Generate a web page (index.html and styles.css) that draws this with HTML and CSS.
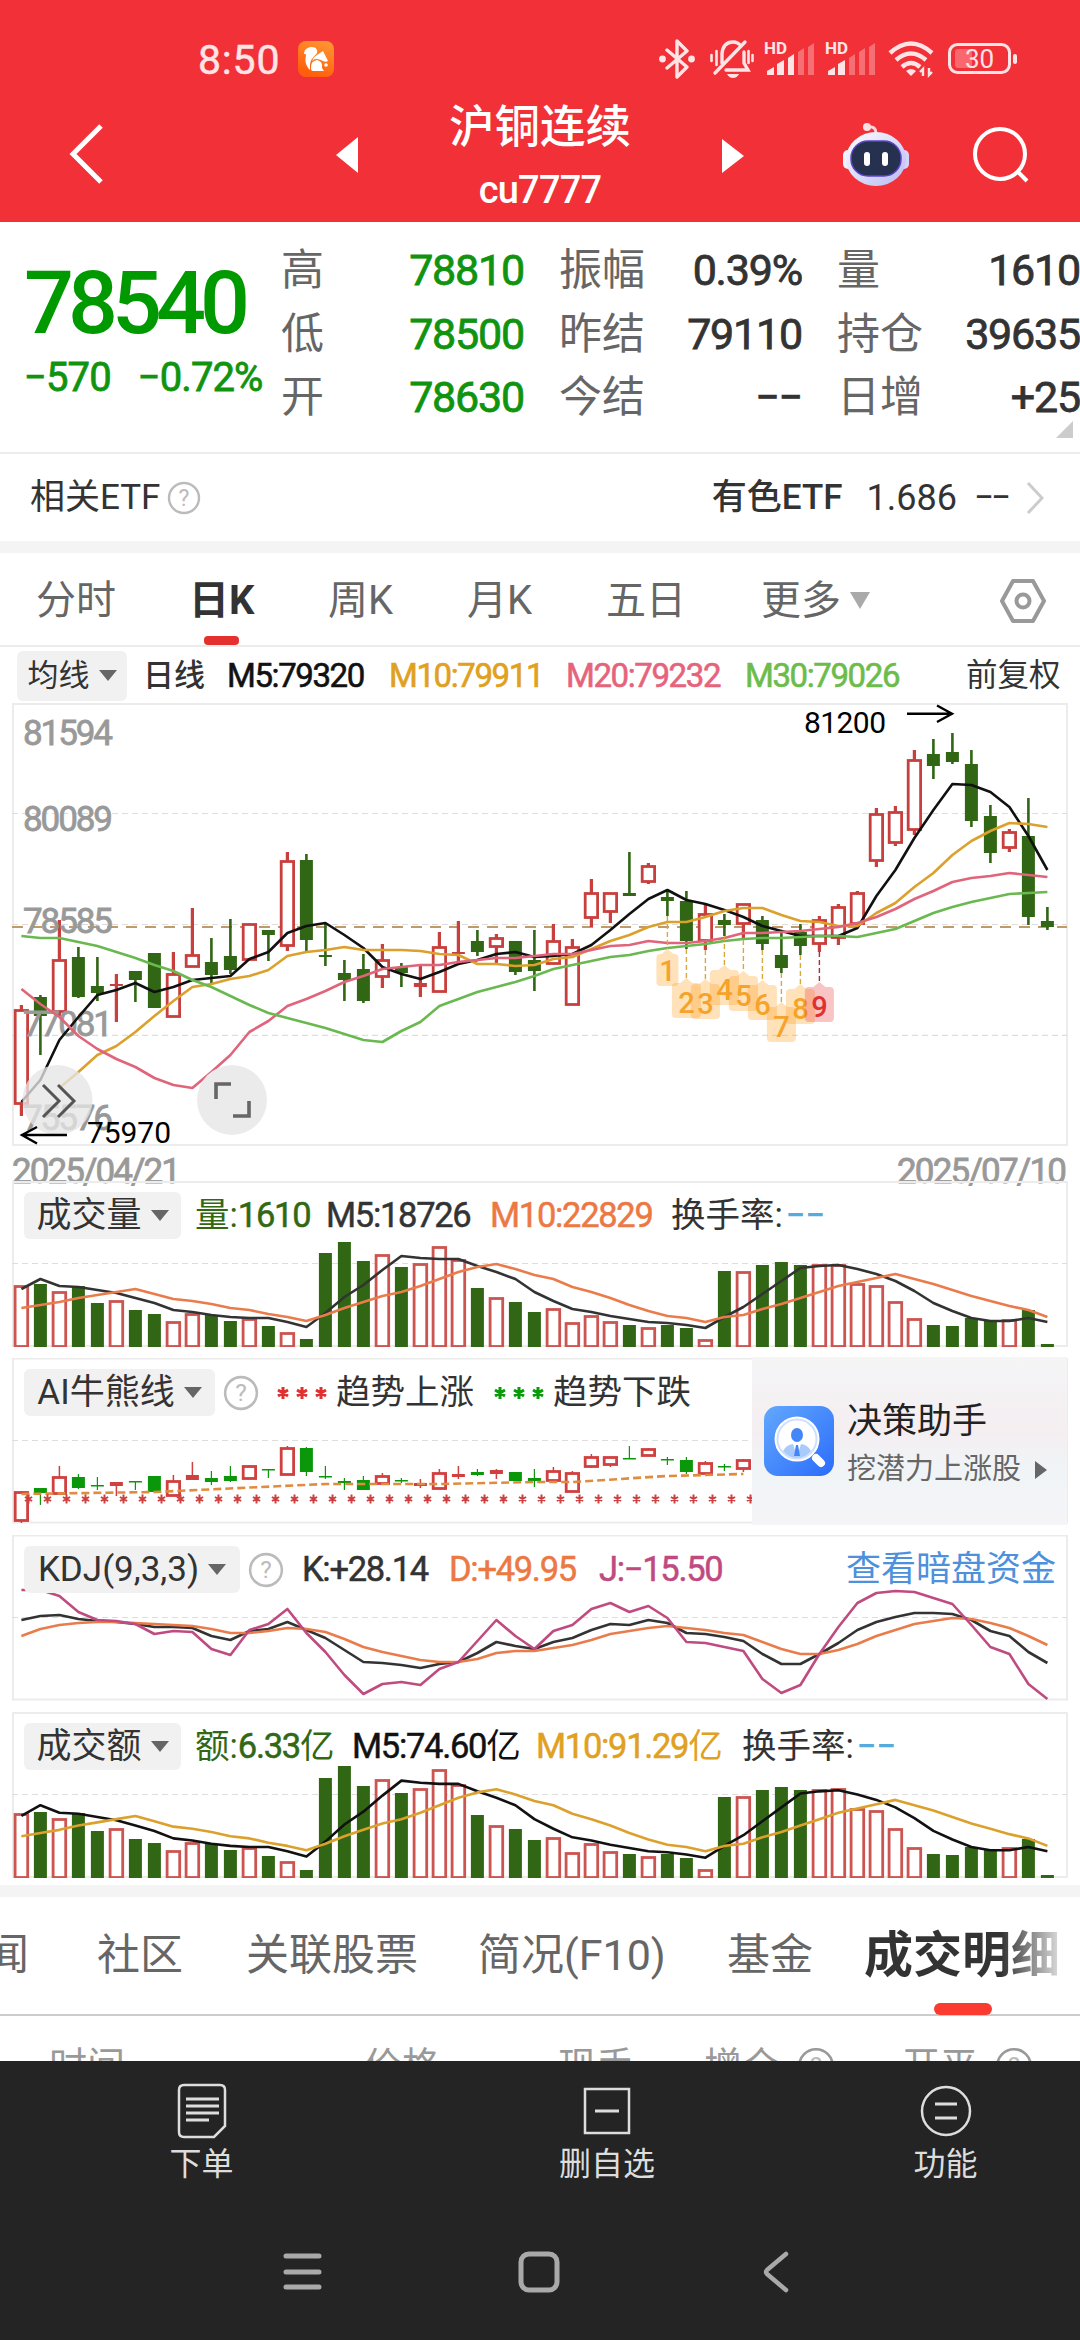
FILE: index.html
```
<!DOCTYPE html>
<html lang="zh-CN">
<head>
    <meta charset="UTF-8">
    <meta name="viewport" content="width=device-width, initial-scale=1.0">
    <title>沪铜连续 cu7777</title>
    <link rel="stylesheet" href="styles.css">
</head>
<body>
    <header>
        <div class="status-bar">
            <span class="clock">8:50</span>
            <svg class="app-badge" width="36" height="36" viewBox="0 0 36 36">
                <defs>
                    <linearGradient id="badge-bg" x1="1" y1="0" x2="0.6" y2="1">
                        <stop offset="0" stop-color="#ff9a35"/>
                        <stop offset="1" stop-color="#ff5f0c"/>
                    </linearGradient>
                </defs>
                <rect width="36" height="36" rx="8" fill="url(#badge-bg)"/>
                <path d="M6 13C6 8 10 6 14 6C18 6 20 9 19 12C17 15 12 18 12 24L12 29C7 24 7 19 8 15Q8 12 6 13Z" fill="#fff"/>
                <path d="M19 14L25 10L27 14L30 20Q27 22 23 19Q20 18 18 18Q15 18 14 21Q15 16 19 14Z" fill="#fff"/>
                <path d="M13 28Q12 20 19 19Q25 20 24 27L26 30H15Q13 30 13 28Z" fill="#fff"/>
                <circle cx="28" cy="24" r="1.8" fill="#fff"/>
            </svg>
            <div class="status-icons">
                <svg width="36" height="40" viewBox="0 0 36 40" fill="none" stroke="#ffe4e6" stroke-width="3.4" stroke-linejoin="round" stroke-linecap="round">
                    <path d="M8 11L28 28L18 38V2L28 12L8 29"/>
                    <g fill="#ffe4e6" stroke="none"><circle cx="3.5" cy="20" r="3.4"/><circle cx="32.5" cy="20" r="3.4"/></g>
                </svg>
                <svg class="bell" width="44" height="40" viewBox="0 0 44 40" fill="none" stroke="#ffe4e6" stroke-width="3.4" stroke-linecap="round">
                    <path d="M12 24V15Q13 3 23 3Q28 3 31 7M34 13V24L38 31H16M5 34L35 3"/>
                    <path d="M1.500 16V22M6.500 12V26M38.500 12V24M42.500 16V22" stroke-width="2.600"/>
                    <path d="M17 35H29Q27 39 23 39Q19 39 17 35Z" fill="#ffe4e6" stroke="none"/>
                </svg>
                <svg class="signal" width="50" height="34" viewBox="0 0 50 34" fill="#ffe4e6">
                    <text x="-1" y="12" class="hd">HD</text>
                    <path d="M2 29L9 25V33H2ZM12 22L19 18V33H12ZM23 16L29 12V33H23Z"/>
                    <path d="M33 10L39 6V33H33ZM43 5L49 1V33H43Z" opacity=".35"/>
                </svg>
                <svg class="signal" width="50" height="34" viewBox="0 0 50 34" fill="#ffe4e6">
                    <text x="-1" y="12" class="hd">HD</text>
                    <path d="M2 29L9 25V33H2ZM12 22L19 18V33H12Z"/>
                    <path d="M23 16L29 12V33H23ZM33 10L39 6V33H33ZM43 5L49 1V33H43Z" opacity=".35"/>
                </svg>
                <svg class="wifi" width="46" height="38" viewBox="0 0 46 38" fill="none" stroke="#ffe4e6" stroke-width="4.4">
                    <path d="M2 13Q23 -6 44 13M8 20Q23 7 38 20M14 27Q23 19 32 27"/>
                    <path d="M18 31Q23 27 28 31L23 36Z" fill="#ffe4e6" stroke="none"/>
                    <path d="M35 36V29L32 32M41 28V35L44 32" stroke-width="2.400"/>
                </svg>
                <svg class="battery" width="70" height="32" viewBox="0 0 70 32">
                    <rect x="1.500" y="1.500" width="60" height="28" rx="8" fill="none" stroke="#ffe4e6" stroke-width="3"/>
                    <rect x="7" y="6" width="17" height="19" rx="3" fill="#f9686e"/>
                    <rect x="65" y="11" width="4" height="10" rx="2" fill="#ffe4e6"/>
                    <text x="31.500" y="25" text-anchor="middle" class="battery-text">30</text>
                </svg>
            </div>
        </div>
        <div class="title-bar">
            <svg class="back" width="36" height="62" viewBox="0 0 36 62" fill="none" stroke="#fff" stroke-width="5"><path d="M33 3L5 31L33 59"/></svg>
            <svg class="prev" width="24" height="36" viewBox="0 0 24 36"><path d="M23 0V36L1 18Z" fill="#fff"/></svg>
            <div class="title">
                <h1>沪铜连续</h1>
                <p>cu7777</p>
            </div>
            <svg class="next" width="24" height="36" viewBox="0 0 24 36"><path d="M1 1V35L23 18Z" fill="#fff"/></svg>
            <svg class="robot" width="68" height="64" viewBox="0 0 68 64">
                <defs>
                    <linearGradient id="shell" x1="0" y1="0" x2="1" y2="1">
                        <stop offset="0" stop-color="#fff"/>
                        <stop offset="1" stop-color="#b9b9f2"/>
                    </linearGradient>
                </defs>
                <path d="M34 11Q34 4 26 5" fill="none" stroke="#fbd5dc" stroke-width="3"/>
                <circle cx="25" cy="5" r="4" fill="#fbdfe4"/>
                <rect x="1" y="28" width="10" height="19" rx="5" fill="#f3f2ff"/>
                <rect x="57" y="28" width="10" height="19" rx="5" fill="#d5d5fb"/>
                <ellipse cx="34" cy="37" rx="30" ry="27" fill="url(#shell)"/>
                <rect x="9" y="19" width="50" height="35" rx="17" fill="#26304f" stroke="#5a45c8" stroke-width="1.500"/>
                <rect x="22" y="30" width="6" height="14" rx="3" fill="#fff"/>
                <rect x="40" y="30" width="6" height="14" rx="3" fill="#fff"/>
            </svg>
            <svg class="search" width="58" height="58" viewBox="0 0 58 58" fill="none" stroke="#fff" stroke-width="4"><circle cx="28" cy="28" r="25"/><path d="M45 45L55 55"/></svg>
        </div>
    </header>

    <section class="quote">
        <div class="price-box">
            <div class="price">78540</div>
            <div class="change"><span>−570</span><span>−0.72%</span></div>
        </div>
        <dl class="stats">
            <div><dt>高</dt><dd class="down">78810</dd></div>
            <div><dt>振幅</dt><dd>0.39%</dd></div>
            <div><dt>量</dt><dd>1610</dd></div>
            <div><dt>低</dt><dd class="down">78500</dd></div>
            <div><dt>昨结</dt><dd>79110</dd></div>
            <div><dt>持仓</dt><dd>39635</dd></div>
            <div><dt>开</dt><dd class="down">78630</dd></div>
            <div><dt>今结</dt><dd>−−</dd></div>
            <div><dt>日增</dt><dd>+25</dd></div>
        </dl>
        <i class="corner"></i>
    </section>

    <section class="etf">
        <span>相关ETF</span>
        <svg class="help" width="34" height="34" viewBox="0 0 34 34"><circle cx="17" cy="17" r="15"/><text x="17" y="25">?</text></svg>
        <b>有色ETF</b>
        <span class="etf-price">1.686</span>
        <span class="etf-rate">−−</span>
        <svg width="20" height="34" viewBox="0 0 20 34" fill="none" stroke="#ccc" stroke-width="3"><path d="M3 2L17 17L3 32"/></svg>
    </section>

    <nav class="periods">
        <a>分时</a>
        <a class="active">日K</a>
        <a>周K</a>
        <a>月K</a>
        <a>五日</a>
        <a>更多<i class="caret"></i></a>
        <svg width="46" height="44" viewBox="0 0 46 44" fill="none" stroke="#999" stroke-width="4"><path d="M13 2H33L44 22L33 42H13L2 22Z" stroke-linejoin="round"/><circle cx="23" cy="22" r="6.500"/></svg>
    </nav>

    <div class="ma-row">
        <span class="chip">均线<i class="caret"></i></span>
        <span class="ma-name">日线</span>
        <span class="ma ma5">M5:79320</span>
        <span class="ma ma10">M10:79911</span>
        <span class="ma ma20">M20:79232</span>
        <span class="ma ma30">M30:79026</span>
        <span class="adjust">前复权</span>
    </div>

    <svg id="kline" class="kline" width="1080" height="477" viewBox="0 4 1080 477"></svg>

    <section class="panel">
        <svg id="volume" class="plot" width="1080" height="166" viewBox="0 1 1080 166"></svg>
        <div class="panel-head">
            <span class="chip">成交量<i class="caret"></i></span>
            <span class="legend green w131">量:<em>1610</em></span>
            <span class="legend w164"><em>M5:18726</em></span>
            <span class="legend orange w181"><em>M10:22829</em></span>
            <span class="legend">换手率:</span><span class="blue">−−</span>
        </div>
    </section>

    <section class="panel">
        <svg id="trend" class="plot" width="1080" height="166" viewBox="0 178 1080 166"></svg>
        <div class="panel-head">
            <span class="chip chip-trend">AI牛熊线<i class="caret"></i></span>
            <svg class="help help-lg" width="36" height="36" viewBox="0 0 34 34"><circle cx="17" cy="17" r="15"/><text x="17" y="25">?</text></svg>
            <svg class="stars" width="52" height="16" viewBox="0 0 52 16" stroke="#e03030"><use href="#s3"/></svg>
            <span class="legend w158">趋势上涨</span>
            <svg class="stars" width="52" height="16" viewBox="0 0 52 16" stroke="#099c09">
                <g id="s3" stroke-width="3"><path d="M6 2V14M1 5L11 11M1 11L11 5M25 2V14M20 5L30 11M20 11L30 5M44 2V14M39 5L49 11M39 11L49 5"/></g>
            </svg>
            <span class="legend">趋势下跌</span>
        </div>
        <a class="promo">
            <svg width="70" height="70" viewBox="0 0 70 70">
                <defs>
                    <linearGradient id="promo-bg" x1="0" y1="0" x2="1" y2="1">
                        <stop offset="0" stop-color="#62a8fd"/>
                        <stop offset="1" stop-color="#2b6cfb"/>
                    </linearGradient>
                </defs>
                <rect width="70" height="70" rx="14" fill="url(#promo-bg)"/>
                <circle cx="33" cy="33" r="20" fill="#fff" stroke="#cfe0ff" stroke-width="3"/>
                <circle cx="33" cy="33" r="21.500" fill="none" stroke="#fff" stroke-width="2"/>
                <ellipse cx="33" cy="29" rx="6" ry="7" fill="#4386f8"/>
                <path d="M19 45Q22 39 29 38L33 51L37 38Q44 39 47 45Q41 52 33 52Q25 52 19 45Z" fill="#a9cbfb"/>
                <path d="M32 39H34L36 50H30Z" fill="#4386f8"/>
                <path d="M52 52L57 57" stroke="#fff" stroke-width="8" stroke-linecap="round"/>
            </svg>
            <span class="promo-text">
                <strong>决策助手</strong>
                <span>挖潜力上涨股<i></i></span>
            </span>
        </a>
    </section>

    <section class="panel">
        <svg id="kdj" class="plot" width="1080" height="166" viewBox="0 5 1080 166"></svg>
        <div class="panel-head">
            <span class="chip chip-kdj">KDJ(9,3,3)<i class="caret"></i></span>
            <svg class="help help-lg" width="36" height="36" viewBox="0 0 34 34"><circle cx="17" cy="17" r="15"/><text x="17" y="25">?</text></svg>
            <span class="legend w147"><em>K:+28.14</em></span>
            <span class="legend orange w150"><em>D:+49.95</em></span>
            <span class="legend pink"><em>J:−15.50</em></span>
            <a class="link">查看暗盘资金</a>
        </div>
    </section>

    <section class="panel panel-last">
        <svg id="amount" class="plot" width="1080" height="166" viewBox="0 0 1080 166"></svg>
        <div class="panel-head">
            <span class="chip">成交额<i class="caret"></i></span>
            <span class="legend green w157">额:<em>6.33</em>亿</span>
            <span class="legend black w184"><em>M5:74.60</em>亿</span>
            <span class="legend gold w206"><em>M10:91.29</em>亿</span>
            <span class="legend">换手率:</span><span class="blue">−−</span>
        </div>
    </section>

    <nav class="detail-tabs">
        <a class="t-news">闻</a>
        <a class="t-bbs">社区</a>
        <a class="t-stock">关联股票</a>
        <a class="t-f10">简况(F10)</a>
        <a class="t-fund">基金</a>
        <a class="active">成交明细</a>
    </nav>

    <div class="table-head">
        <span>时间</span>
        <span>价格</span>
        <span>现手</span>
        <span>增仓<svg class="help" width="38" height="38" viewBox="0 0 34 34"><circle cx="17" cy="17" r="15"/><text x="17" y="25">?</text></svg></span>
        <span>开平<svg class="help" width="38" height="38" viewBox="0 0 34 34"><circle cx="17" cy="17" r="15"/><text x="17" y="25">?</text></svg></span>
    </div>

    <footer>
        <div class="actions">
            <a>
                <svg width="50" height="56" viewBox="0 0 50 56" fill="none" stroke="#ddd" stroke-width="2.500">
                    <path d="M7 2H43Q48 2 48 7V43L37 54H7Q2 54 2 49V7Q2 2 7 2Z"/>
                    <path d="M9 16H42M9 23H42M9 30H42M9 37H32" stroke-width="3"/>
                </svg>
                <span>下单</span>
            </a>
            <a>
                <svg width="50" height="56" viewBox="0 0 50 56" fill="none" stroke="#ddd" stroke-width="2.500"><rect x="3" y="6" width="44" height="44"/><path d="M13 28H37" stroke-width="3"/></svg>
                <span>删自选</span>
            </a>
            <a>
                <svg width="52" height="56" viewBox="0 0 52 56" fill="none" stroke="#ddd" stroke-width="2.500"><circle cx="26" cy="28" r="24"/><path d="M15 21H37M15 35H37" stroke-width="3"/></svg>
                <span>功能</span>
            </a>
        </div>
        <div class="system-nav">
            <svg width="40" height="42" viewBox="0 0 40 42" stroke="#a9a9a9" stroke-width="5" stroke-linecap="round"><path d="M3 5H36M3 21H36M3 36H36"/></svg>
            <svg class="home" width="42" height="42" viewBox="0 0 42 42" fill="none" stroke="#a9a9a9" stroke-width="5"><rect x="3" y="3" width="36" height="36" rx="8"/></svg>
            <svg width="28" height="42" viewBox="0 0 28 42" fill="none" stroke="#a9a9a9" stroke-width="4.500" stroke-linecap="round" stroke-linejoin="round"><path d="M24 3L5 19Q3 21 5 23L24 39"/></svg>
        </div>
    </footer>

    <script src="script.js"></script>
</body>
</html>
```
FILE: styles.css
```
:root {
    --red: #f13038;
    --down: #109410;
    --text: #333;
    --muted: #666;
    --line: #ececec;
    --chip: #f1f1f1;
}

* {
    box-sizing: border-box;
}

body {
    width: 1080px;
    height: 2340px;
    margin: 0;
    overflow: hidden;
    background: #fff;
    color: var(--text);
    font-family: Roboto, "Noto Sans CJK SC", sans-serif;
    font-size: 35px;
    line-height: 1;
}

svg {
    display: block;
    flex: none;
}

h1, p, dl, dd {
    margin: 0;
}

em {
    font-style: normal;
    letter-spacing: -1.3px;
    -webkit-text-stroke: 0.5px;
}

/* header */
header {
    height: 222px;
    background: var(--red);
    color: #fff;
}

.status-bar {
    display: flex;
    align-items: center;
    height: 90px;
    padding: 28px 62px 0 198px;
}

.clock {
    color: #ffe4e6;
    font-size: 41px;
    width: 100px;
    padding-top: 2px;
    letter-spacing: 0.8px;
    -webkit-text-stroke: 0.5px;
}

.status-icons {
    display: flex;
    align-items: center;
    margin-left: auto;
}

.bell {
    margin-left: 15px;
}

.signal {
    margin-left: 11px;
    overflow: visible;
}

.wifi {
    margin-left: 12px;
}

.battery {
    margin-left: 14px;
}

.hd {
    font-size: 17px;
    font-weight: 700;
}

.battery-text {
    font-size: 26px;
    fill: #ffe4e6;
}

.title-bar {
    display: flex;
    align-items: flex-start;
    padding: 0 50px 0 68px;
}

.back {
    margin-top: 33px;
}

.prev {
    margin: 47px 0 0 231px;
}

.title {
    width: 362px;
    text-align: center;
}

.title h1 {
    margin-top: 15px;
    font-size: 45.5px;
    font-weight: 500;
}

.title p {
    margin-top: 20px;
    font-size: 38px;
    font-weight: 500;
    letter-spacing: -0.8px;
}

.next {
    margin-top: 48px;
}

.robot {
    margin: 32px 0 0 97px;
}

.search {
    margin: 36px 0 0 62px;
}

/* quote */
.quote {
    position: relative;
    display: flex;
    height: 232px;
    border-bottom: 2px solid var(--line);
}

.price-box {
    width: 281px;
    padding: 37px 0 0 24px;
    color: #090;
    white-space: nowrap;
}

.price {
    font-size: 88px;
    font-weight: 500;
    letter-spacing: -6px;
}

.change {
    display: flex;
    gap: 27px;
    margin-top: 11px;
    color: var(--down);
    font-size: 40px;
    letter-spacing: -0.9px;
    -webkit-text-stroke: 0.8px;
}

.stats {
    display: grid;
    grid-template-columns: repeat(3, 242px);
    grid-auto-rows: 63.5px;
    column-gap: 36px;
    padding-top: 17px;
}

.stats div {
    display: flex;
    justify-content: space-between;
    align-items: center;
}

.stats dt {
    color: var(--muted);
    font-size: 43px;
}

.stats dd {
    margin-right: -1px;
    font-size: 43px;
    letter-spacing: -1.2px;
    -webkit-text-stroke: 0.8px;
}

.stats .down {
    color: var(--down);
}

.corner {
    position: absolute;
    right: 7px;
    bottom: 14px;
    border-left: 17px solid transparent;
    border-bottom: 17px solid #ccc;
}

.etf {
    display: flex;
    align-items: center;
    height: 99px;
    padding: 0 35px 0 30px;
    border-bottom: 12px solid #f4f4f4;
    font-size: 35px;
    white-space: nowrap;
}

.etf b {
    margin-left: auto;
    font-weight: 500;
}

.etf-price {
    margin-left: 24px;
    font-size: 36px;
}

.etf-rate {
    width: 32px;
    margin: 0 19px 0 17px;
    letter-spacing: -3px;
}

.help {
    margin-left: 7px;
    fill: none;
    stroke: #bbb;
    stroke-width: 2.4;
}

.help text {
    fill: #bbb;
    stroke: none;
    font-size: 23px;
    text-anchor: middle;
}

.help-lg {
    margin: 0 18px 0 8px;
}

/* period tabs */
.periods {
    display: flex;
    align-items: center;
    height: 94px;
    padding: 3px 33px 0 36px;
    border-bottom: 2px solid var(--line);
    color: var(--muted);
    font-size: 40px;
}

.periods a {
    position: relative;
    width: 139px;
    white-space: nowrap;
}

.periods a:first-child {
    width: 153px;
}

.periods a:nth-child(5) {
    width: 155px;
}

.periods a:nth-child(6) {
    width: 239px;
}

.periods .active {
    color: var(--text);
    font-weight: 700;
}

.periods .active::after {
    content: "";
    position: absolute;
    left: 15px;
    bottom: -24px;
    width: 35px;
    height: 9px;
    border-radius: 4px;
    background: #e53030;
}

.caret {
    display: inline-block;
    margin-left: 9px;
    border: 9px solid transparent;
    border-top: 11px solid #666;
    border-bottom: 0;
    vertical-align: 7px;
}

.periods .caret {
    border-width: 17px 10px 0;
    border-top-color: #aaa;
    vertical-align: 5px;
}

.chip {
    display: flex;
    align-items: center;
    justify-content: center;
    width: 157px;
    height: 47px;
    margin-right: 14px;
    border-radius: 6px;
    background: var(--chip);
    white-space: nowrap;
}

.ma-row {
    display: flex;
    align-items: center;
    height: 57px;
    padding-left: 17px;
    font-size: 33px;
    white-space: nowrap;
}

.ma-row .chip {
    width: 110px;
    height: 50px;
    margin-right: 16px;
    font-size: 31px;
}

.ma-name {
    width: 84px;
    font-size: 31px;
    font-weight: 500;
}

.ma {
    width: 177px;
    letter-spacing: -1.4px;
    -webkit-text-stroke: 0.6px;
}

.ma5 {
    width: 162px;
    color: #111;
}

.ma10 {
    color: #e0a020;
}

.ma20 {
    width: 179px;
    color: #e5647c;
}

.ma30 {
    width: 221px;
    color: #6cbc4c;
}

.adjust {
    font-size: 31.5px;
}

/* charts */
.kline {
    position: relative;
    overflow: visible;
}

.axis {
    fill: #999;
    stroke: #999;
    stroke-width: 0.8;
    font-size: 35px;
}

.mark {
    font-size: 30px;
    fill: #000;
}

.nine {
    font-size: 29px;
    font-weight: 500;
    text-anchor: middle;
}

.panel {
    position: relative;
    height: 177px;
}

.panel-last {
    height: 173px;
}

.plot {
    position: absolute;
    left: 0;
    top: 0;
}

.panel-head {
    position: relative;
    display: flex;
    align-items: center;
    height: 47px;
    padding: 0 24px 0 24px;
    top: 11px;
    white-space: nowrap;
}

.chip-trend {
    width: 191px;
    margin-right: 0;
}

.chip-kdj {
    width: 216px;
    margin-right: 0;
}

.stars {
    margin-right: 7px;
}

.link {
    margin-left: auto;
    color: #4d90dc;
}

.w131 { width: 131px; }
.w147 { width: 147px; }
.w150 { width: 150px; }
.w157 { width: 157px; }
.w158 { width: 158px; }
.w164 { width: 164px; }
.w181 { width: 181px; }
.w184 { width: 184px; }
.w206 { width: 206px; }

.green { color: #326814; }
.orange { color: #ec7844; }
.pink { color: #c04a80; }
.gold { color: #e0a020; }
.black { color: #111; }

.legend {
    font-size: 34.5px;
}

.blue {
    margin-left: 3px;
    color: #55aade;
    font-weight: 500;
}

.promo {
    position: absolute;
    left: 752px;
    top: -1px;
    display: flex;
    align-items: center;
    gap: 13px;
    width: 315px;
    height: 168px;
    padding-left: 12px;
    background: linear-gradient(#f5f5f6, #f4eef1 45%, #f0f4f6 65%, #f5f4f8);
}

.promo-text {
    display: flex;
    flex-direction: column;
    gap: 16px;
    padding-top: 6px;
    color: #666;
    font-size: 29px;
    white-space: nowrap;
}

.promo-text strong {
    color: #222;
    font-size: 35px;
    font-weight: 400;
}

.promo-text i {
    display: inline-block;
    margin-left: 14px;
    border: 9px solid transparent;
    border-left: 12px solid #666;
    border-right: 0;
}

/* detail tabs */
.detail-tabs {
    position: relative;
    display: flex;
    align-items: center;
    height: 131px;
    border-top: 12px solid #f4f4f4;
    border-bottom: 2px solid #ccc;
    color: var(--muted);
    font-size: 43px;
    white-space: nowrap;
}

.detail-tabs .t-news {
    width: 111px;
    margin-left: -14px;
}

.t-bbs { width: 149px; }
.t-stock { width: 232px; }
.t-f10 { width: 249px; }
.t-fund { width: 137px; }

.detail-tabs .active {
    background: linear-gradient(90deg, #333 70%, #ddd);
    background-clip: text;
    -webkit-background-clip: text;
    color: transparent;
    font-size: 49px;
    font-weight: 700;
    line-height: 1.3;
}

.detail-tabs::after {
    content: "";
    position: absolute;
    left: 934px;
    bottom: -1px;
    width: 58px;
    height: 12px;
    border-radius: 6px;
    background: #fb3a30;
}

.table-head {
    display: grid;
    grid-template-columns: 315px 194px 146px 198px auto;
    height: 45px;
    padding: 31px 0 0 49px;
    overflow: hidden;
    color: #999;
    font-size: 38px;
}

.table-head span {
    display: flex;
    height: 44px;
}

.table-head .help {
    margin-left: 17px;
    stroke: #999;
}

/* bottom */
footer {
    position: relative;
    height: 280px;
    background: #242424;
    color: #ddd;
}

.actions {
    display: grid;
    grid-template-columns: 403px 408px 269px;
    padding-top: 22px;
    font-size: 32px;
}

.actions a {
    display: flex;
    flex-direction: column;
    align-items: center;
    gap: 9px;
}

.system-nav {
    display: flex;
    align-items: center;
    justify-content: space-between;
    margin-top: 71px;
    padding: 0 290px 0 283px;
}

.home {
    margin-right: 7px;
}
```
FILE: script.js
```
const STEP = 19;
const X0 = 21.4;
const UP = '#c8403e';
const DOWN = '#306614';
const x = i => X0 + i * STEP;

// [direction, high, body top, body bottom, low]
const candles = [
    ['u', 305, 310, 403, 416], ['d', 295, 297, 316, 355], ['u', 220, 260, 311, 316], ['d', 247, 257, 297, 298],
    ['d', 257, 286, 293, 301], ['u', 274, 284, 286, 322], ['d', 271, 271, 280, 302], ['d', 253, 253, 308, 308],
    ['u', 252, 274, 316, 316], ['u', 208, 255, 266, 266], ['d', 238, 262, 275, 285], ['d', 219, 256, 270, 274],
    ['u', 224, 224, 259, 259], ['d', 230, 230, 235, 261], ['u', 152, 161, 245, 251], ['d', 154, 160, 240, 251],
    ['d', 223, 255, 257, 266], ['d', 260, 273, 280, 301], ['d', 254, 269, 301, 303], ['u', 244, 260, 276, 288],
    ['d', 263, 267, 273, 287], ['u', 266, 283, 287, 297], ['u', 232, 247, 291, 291], ['u', 221, 252, 254, 265],
    ['d', 230, 241, 252, 256], ['u', 234, 238, 246, 263], ['d', 241, 241, 272, 275], ['d', 230, 260, 271, 291],
    ['u', 224, 241, 263, 263], ['u', 239, 247, 304, 304], ['u', 179, 193, 217, 227], ['u', 193, 193, 211, 223],
    ['d', 152, 193, 196, 196], ['u', 163, 166, 181, 184], ['d', 191, 197, 201, 216], ['d', 191, 201, 241, 249],
    ['u', 204, 214, 240, 250], ['d', 214, 220, 225, 236], ['u', 204, 204, 223, 240], ['d', 216, 220, 244, 250],
    ['d', 233, 255, 268, 273], ['d', 224, 232, 246, 255], ['u', 216, 220, 243, 252], ['u', 204, 207, 237, 245],
    ['u', 191, 193, 223, 223], ['u', 108, 114, 160, 167], ['u', 106, 112, 142, 146], ['u', 50, 60, 129, 135],
    ['d', 39, 54, 66, 79], ['d', 33, 52, 62, 64], ['d', 50, 64, 121, 127], ['d', 105, 116, 153, 163],
    ['u', 129, 132, 147, 152], ['d', 98, 136, 217, 225], ['d', 207, 221, 227, 230]
];

const ma5 = [402, 380, 340, 317, 295, 290, 283, 292, 287, 280, 278, 276, 259, 252, 233, 226, 223, 235, 248, 267, 274, 279, 272, 264, 260, 254, 252, 257, 256, 254, 245, 230, 214, 199, 190, 200, 204, 210, 217, 226, 231, 236, 236, 236, 228, 196, 170, 138, 110, 84, 85, 92, 107, 136, 170];
// the 10-day line starts on candle 2
const ma10 = [388, 372, 355, 346, 332, 316, 301, 287, 284, 279, 276, 270, 256, 252, 250, 247, 250, 250, 250, 251, 254, 255, 264, 264, 266, 265, 259, 257, 249, 241, 235, 227, 222, 222, 217, 211, 208, 208, 215, 221, 222, 226, 226, 213, 203, 187, 173, 155, 141, 131, 123, 124, 127];
const ma20 = [289, 304, 317, 336, 349, 359, 367, 378, 385, 388, 372, 355, 332, 321, 306, 299, 291, 282, 276, 269, 267, 265, 265, 262, 260, 258, 258, 256, 254, 254, 250, 246, 245, 241, 243, 243, 241, 238, 233, 233, 232, 231, 229, 227, 223, 217, 209, 199, 191, 182, 178, 176, 173, 175, 177];
const ma30 = [236, 238, 238, 242, 246, 252, 258, 265, 271, 280, 287, 296, 305, 313, 318, 323, 328, 334, 340, 342, 331, 322, 306, 299, 292, 287, 282, 276, 269, 265, 261, 257, 255, 251, 248, 246, 244, 241, 239, 238, 238, 237, 236, 236, 237, 233, 229, 221, 213, 207, 202, 198, 194, 193, 192];

const volumes = [106, 104, 112, 106, 123, 121, 130, 134, 142, 134, 135, 141, 139, 146, 153, 159, 73, 62, 81, 75, 87, 84, 67, 80, 108, 118, 122, 132, 129, 143, 136, 142, 145, 148, 145, 148, 160, 91, 92, 85, 82, 85, 85, 85, 104, 106, 122, 139, 145, 146, 138, 140, 140, 130, 164];
const vol5 = [109, 99, 106, 107, 110, 113, 118, 123, 130, 132, 135, 137, 138, 138, 142, 147, 133, 117, 105, 90, 76, 78, 79, 79, 86, 92, 99, 112, 121, 129, 132, 136, 139, 142, 143, 145, 148, 137, 127, 114, 101, 88, 86, 85, 89, 94, 101, 111, 123, 131, 138, 141, 141, 138, 142];
const vol10 = [128, 125, 122, 118, 115, 112, 109, 114, 119, 121, 124, 128, 130, 134, 137, 141, 135, 128, 122, 116, 112, 106, 99, 92, 87, 84, 89, 95, 99, 107, 112, 118, 125, 131, 136, 138, 142, 137, 135, 129, 124, 118, 112, 106, 102, 98, 94, 99, 104, 110, 116, 121, 126, 130, 137];
const amounts = [102, 100, 107, 101, 119, 117, 127, 131, 139, 131, 132, 138, 136, 144, 150, 158, 66, 54, 74, 68, 81, 77, 58, 73, 103, 114, 117, 128, 126, 141, 132, 140, 142, 145, 142, 146, 158, 85, 85, 78, 75, 78, 78, 77, 97, 99, 117, 136, 142, 143, 135, 137, 136, 127, 163];

const kLine = [90, 86, 85, 89, 91, 92, 94, 97, 97, 98, 106, 110, 101, 99, 92, 100, 108, 120, 132, 133, 135, 138, 134, 132, 123, 112, 116, 119, 112, 108, 100, 94, 95, 90, 93, 103, 104, 107, 111, 124, 134, 134, 124, 113, 100, 92, 87, 83, 83, 84, 90, 101, 106, 122, 133];
const dLine = [106, 99, 95, 93, 92, 92, 93, 94, 95, 96, 99, 103, 103, 101, 98, 99, 102, 109, 117, 122, 126, 130, 132, 132, 129, 123, 121, 121, 118, 115, 110, 104, 101, 98, 96, 98, 100, 103, 105, 112, 119, 124, 124, 120, 114, 106, 100, 94, 91, 88, 89, 93, 98, 106, 115];
const jLine = [60, 60, 66, 82, 90, 91, 94, 104, 101, 102, 119, 125, 100, 94, 79, 103, 122, 145, 164, 154, 152, 155, 139, 132, 111, 90, 106, 119, 101, 95, 79, 73, 82, 76, 88, 112, 113, 117, 121, 149, 163, 155, 124, 97, 73, 63, 61, 62, 68, 74, 95, 117, 124, 154, 169];

const trendCandles = [
    ['u', 311, 312, 340, 343], ['d', 308, 308, 313, 325], ['u', 286, 297, 313, 313], ['d', 294, 297, 308, 309],
    ['d', 297, 305, 306, 310], ['u', 302, 302, 306, 316], ['d', 301, 301, 302, 310], ['d', 296, 296, 312, 312],
    ['u', 295, 301, 315, 315], ['u', 282, 295, 300, 300], ['d', 291, 298, 302, 305], ['d', 286, 296, 301, 302],
    ['u', 285, 286, 298, 298], ['d', 289, 289, 290, 298], ['u', 266, 268, 294, 295], ['d', 267, 268, 292, 296],
    ['d', 286, 296, 297, 299], ['d', 298, 301, 303, 310], ['d', 296, 300, 310, 310], ['u', 293, 296, 303, 305],
    ['d', 298, 300, 301, 303], ['u', 299, 303, 306, 308], ['u', 289, 293, 308, 308], ['u', 286, 294, 297, 299],
    ['d', 289, 292, 295, 296], ['u', 289, 290, 294, 299], ['d', 292, 292, 301, 301], ['d', 289, 298, 301, 307],
    ['u', 287, 291, 300, 300], ['u', 291, 293, 311, 311], ['u', 274, 277, 286, 288], ['u', 277, 277, 284, 287],
    ['d', 266, 278, 279, 279], ['u', 268, 269, 275, 275], ['d', 277, 279, 280, 285], ['d', 277, 280, 292, 294],
    ['u', 281, 283, 293, 293], ['d', 284, 286, 287, 291], ['u', 279, 280, 288, 292]
];

// nine-turn markers, first one sits on candle 34
const nineTops = [249, 278, 279, 265, 271, 280, 302, 284, 282];

function poly(data, color, start = 0, width = 2.6) {
    const pts = data.map((y, i) => `${x(i + start)},${y}`).join(' ');
    return `<polyline points="${pts}" fill="none" stroke="${color}" stroke-width="${width}" stroke-linejoin="round"/>`;
}

function grid(y, color = '#ddd', width = 1.2) {
    return `<path d="M12 ${y}H1067" stroke="${color}" stroke-width="${width}" stroke-dasharray="6 4"/>`;
}

function frame(top, height) {
    return `<rect x="13" y="${top}" width="1054" height="${height}" fill="none" stroke="#ececec" stroke-width="2"/>`;
}

function drawCandles(list, up, down, wick) {
    return list.map(([dir, high, top, bottom, low], i) => {
        const cx = x(i);
        const color = dir === 'u' ? up : down;
        const w = dir === 'u' ? wick * 1.25 : wick;
        let out = `<path d="M${cx} ${high}V${top}M${cx} ${bottom}V${low}" stroke="${color}" stroke-width="${w}"/>`;
        if (dir === 'd' || bottom - top < 6) {
            out += `<rect x="${cx - 6.5}" y="${top}" width="13" height="${Math.max(bottom - top, 1.5)}" fill="${color}"/>`;
        } else {
            out += `<rect x="${cx - 6.2}" y="${top + 0.5}" width="12.4" height="${bottom - top}" fill="#fff" stroke="${color}" stroke-width="2.8"/>`;
        }
        return out;
    }).join('');
}

function drawBars(list, base) {
    return list.map((top, i) => {
        const cx = x(i);
        if (candles[i][0] === 'd') {
            return `<rect x="${cx - 6.5}" y="${top}" width="13" height="${base - top}" fill="${DOWN}"/>`;
        }
        return `<rect x="${cx - 6.3}" y="${top + 0.5}" width="12.6" height="${base - top - 1}" fill="#fff" stroke="#cc5552" stroke-width="2.8"/>`;
    }).join('');
}

function drawNine() {
    return nineTops.map((top, n) => {
        const cx = x(34 + n);
        const half = n === 0 ? 11 : 14.5;
        const last = n === 8;
        const h = n === 0 ? 37 : 40;
        return `<path d="M${cx} ${candles[34 + n][4]}V${top}" stroke="${last ? '#a03040' : '#d8a840'}" stroke-width="1.4" stroke-dasharray="5 3"/>
            <path d="M${cx} ${top}L${cx + 6} ${top + 5}H${cx + half - 4}Q${cx + half} ${top + 5} ${cx + half} ${top + 9}V${top + h - 4}Q${cx + half} ${top + h} ${cx + half - 4} ${top + h}H${cx - half + 4}Q${cx - half} ${top + h} ${cx - half} ${top + h - 4}V${top + 9}Q${cx - half} ${top + 5} ${cx - half + 4} ${top + 5}H${cx - 6}Z" fill="${last ? '#e83a3a' : '#ff9a1c'}" fill-opacity=".3"/>
            <text class="nine" x="${cx}" y="${top + h - 5}" fill="${last ? '#e03030' : '#f5a32a'}">${n + 1}</text>`;
    }).join('');
}

function drawKline() {
    const labels = [['81594', 45], ['80089', 131], ['78585', 233], ['77081', 335.5], ['75576', 430]];
    return frame(4, 441) + grid(113.5) + grid(224.5) + grid(335.3) +
        grid(227, '#c09a68', 1.8).replace('6 4', '11 8') +
        drawCandles(candles, UP, DOWN, 2.6) +
        labels.map(([t, y]) => `<text class="axis" x="23" y="${y}" textLength="90">${t}</text>`).join('') +
        poly(ma5, '#111') + poly(ma10, '#dca02c', 2) + poly(ma20, '#e0647a') + poly(ma30, '#6ab850') +
        drawNine() +
        `<text class="mark" x="804" y="33" textLength="82">81200</text>
        <path d="M907 13.700H952M937 5.500L952 13.700L937 22" fill="none" stroke="#000" stroke-width="2.400"/>
        <circle cx="57.500" cy="400" r="35" fill="#e6e6e6" fill-opacity=".78"/>
        <circle cx="232" cy="400" r="35" fill="#ebebeb"/>
        <path d="M43 385L59 401L43 417M58 385L74 401L58 417" fill="none" stroke="#555" stroke-width="3"/>
        <path d="M216 399V384H231M249 401V416H233" fill="none" stroke="#666" stroke-width="3.600"/>
        <text class="mark" x="87" y="443" textLength="84">75970</text>
        <path d="M67 435H23M37 427L22 435L37 443.500" fill="none" stroke="#000" stroke-width="2.400"/>
        <text class="axis" x="12" y="482.500" textLength="169">2025/04/21</text>
        <text class="axis" x="897" y="482.500" textLength="170">2025/07/10</text>`;
}

function drawTrend() {
    let stars = '';
    for (let i = 0; i < 39; i++) {
        const cx = 28.5 + i * STEP;
        stars += `M${cx} 314.5V323.500M${cx - 3.6} 317L${cx + 3.6} 321M${cx - 3.6} 321L${cx + 3.6} 317`;
    }
    return frame(178.5, 164) + grid(260.5) + drawCandles(trendCandles, '#d04040', '#0a980a', 1.2) +
        `<path d="M${x(0)} 314L${x(7)} 312L${x(16)} 304H${x(22)}L${x(27)} 302H${x(29)}L${x(34)} 296L${x(38)} 294" fill="none" stroke="#e08c40" stroke-width="2.6" stroke-dasharray="8 4"/>
        <path d="${stars}" stroke="#cc4040" stroke-width="2"/>`;
}

// turnover averages follow the volume ones at a slightly larger scale
const toAmount = list => list.map(y => 166 - (167 - y) * 1.07);

document.getElementById('kline').innerHTML = drawKline();
document.getElementById('volume').innerHTML = frame(2, 164) + grid(83.5) + drawBars(volumes, 167) + poly(vol5, '#333') + poly(vol10, '#ea7c4c');
document.getElementById('trend').innerHTML = drawTrend();
document.getElementById('kdj').innerHTML = frame(5.5, 164) + grid(87.5) + poly(kLine, '#333') + poly(dLine, '#ea7c4c') + poly(jLine, '#bf4b80');
document.getElementById('amount').innerHTML = frame(1, 164) + grid(82.5) + drawBars(amounts, 166) + poly(toAmount(vol5), '#111') + poly(toAmount(vol10), '#dca02c');
```
